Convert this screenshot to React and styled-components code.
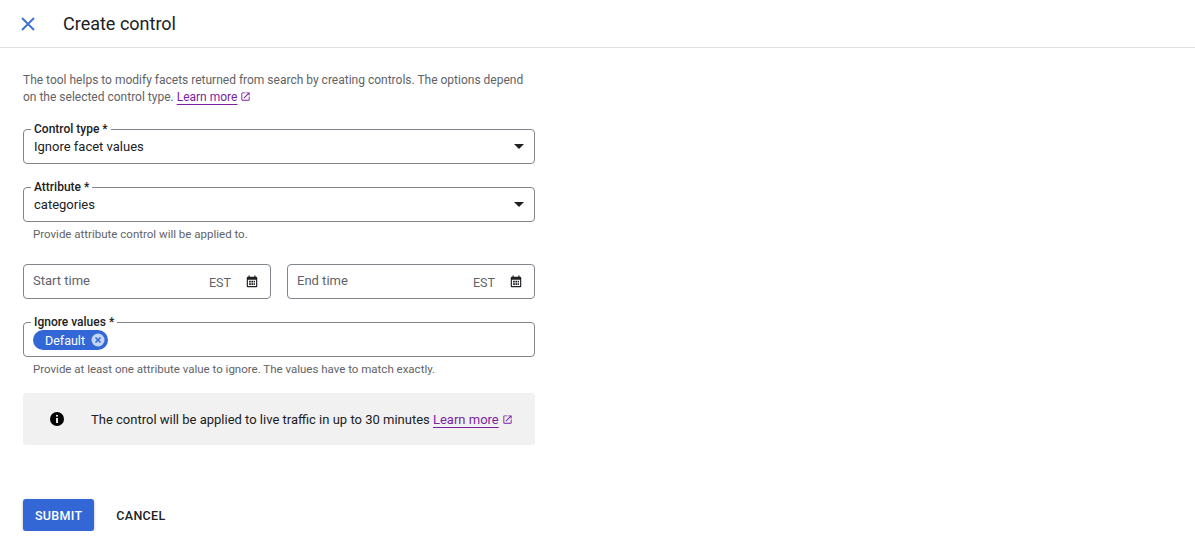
import React from "react";
import styled, { createGlobalStyle } from "styled-components";

const Global = createGlobalStyle`
  body { margin: 0; font-family: Roboto, "Liberation Sans", sans-serif; color: #202124; background: #fff; }
`;

const Header = styled.header`
  height: 48px; display: flex; align-items: center; border-bottom: 1px solid #e0e0e0; box-sizing: border-box;
`;
const CloseBtn = styled.button`
  width: 54px; height: 48px; border: 0; background: none; padding: 0 0 0 2px; display: flex; align-items: center; justify-content: center;
`;
const Title = styled.h1`
  margin: 0 0 0 9px; font-size: 18px; font-weight: 400; color: #202124;
`;
const Body = styled.main`
  padding: 24px 23px 0; width: 512px; display: flex; flex-direction: column;
`;
const Desc = styled.p`
  margin: 0; font-size: 12px; line-height: 17px; color: #5f6368; width: 505px;
`;
const Link = styled.a`
  color: #7b1fa2; text-decoration: underline; text-underline-offset: 3px; cursor: pointer;
`;
const Field = styled.fieldset`
  margin: ${p => p.$mt || 0}px 0 0; padding: 0 10px 6px; border: 1px solid #80868b; border-radius: 4px;
  display: flex; align-items: center; min-width: 0;
`;
const Legend = styled.legend`
  font-size: 12px; line-height: 12px; font-weight: 500; padding: 0 3px; margin-left: -3px; color: #202124;
`;
const Value = styled.div`
  flex: 1; font-size: 13px; color: #202124; display: flex; align-items: center; height: 22px;
`;
const Hint = styled.div`
  font-size: 11.5px; color: #5f6368; padding: 6px 0 0 10px; line-height: 13px;
`;
const Row = styled.div`
  display: flex; gap: 16px; margin-top: 23px;
`;
const Box = styled.div`
  flex: 1; height: 35px; box-sizing: border-box; border: 1px solid #80868b; border-radius: 4px;
  display: flex; align-items: center; padding: 0 11px 0 9px; font-size: 13px; color: #5f6368; gap: 14px;
`;
const Grow = styled.span` flex: 1; margin-top: -2px; `;
const Tz = styled.span` font-size: 12.5px; color: #5f6368; margin-top: 2px; `;
const Chip = styled.span`
  background: #3367d6; color: #fff; border-radius: 12px; height: 20px; display: inline-flex; align-items: center;
  padding: 0 2px 0 12px; font-size: 12.5px; gap: 5px; margin-left: -1px; margin-top: 2px;
`;
const Info = styled.div`
  margin-top: 17px; background: #f1f1f1; border-radius: 3px; height: 52px; display: flex; align-items: center;
  padding-left: 26px; gap: 26px; font-size: 13px; color: #202124;
`;
const Actions = styled.div`
  display: flex; align-items: center; gap: 10px; margin-top: 54px;
`;
const Btn = styled.button`
  height: 32px; border: 0; border-radius: 3px; font-family: inherit; font-size: 12.5px; font-weight: 500; letter-spacing: 0.3px;
  padding: 0 12px; cursor: pointer;
  background: ${p => p.$primary ? "#3367d6" : "transparent"};
  color: ${p => p.$primary ? "#fff" : "#202124"};
  box-shadow: ${p => p.$primary ? "0 1px 3px rgba(0,0,0,0.3)" : "none"};
`;

const Caret = () => (
  <svg width="10" height="5" viewBox="0 0 10 5"><path d="M0 0h10L5 5z" fill="#202124" /></svg>
);
const Ext = () => (
  <svg width="11" height="11" viewBox="0 0 24 24" style={{ verticalAlign: "-1px" }}><path d="M19 19H5V5h7V3H5a2 2 0 0 0-2 2v14a2 2 0 0 0 2 2h14c1.1 0 2-.9 2-2v-7h-2v7zM14 3v2h3.59l-9.83 9.83 1.41 1.41L19 6.41V10h2V3h-7z" fill="#7b1fa2" /></svg>
);
const Cal = () => (
  <svg width="14" height="14" viewBox="0 0 24 24"><path d="M19 3h-1V1h-2v2H8V1H6v2H5a2 2 0 0 0-2 2v14a2 2 0 0 0 2 2h14a2 2 0 0 0 2-2V5a2 2 0 0 0-2-2zm0 16H5V8h14v11zM7 10h3v3H7zm4 0h3v3h-3zm4 0h2v3h-2zm-8 4h3v3H7zm4 0h3v3h-3zm4 0h2v3h-2z" fill="#202124" /></svg>
);

export default function App() {
  return (
    <>
      <Global />
      <Header>
        <CloseBtn aria-label="Close">
          <svg width="14" height="14" viewBox="0 0 14 14"><path d="M1 1l12 12M13 1L1 13" stroke="#3b6fd8" strokeWidth="1.8" /></svg>
        </CloseBtn>
        <Title>Create control</Title>
      </Header>
      <Body>
        <Desc>
          The tool helps to modify facets returned from search by creating controls. The options depend on the selected control type. <Link>Learn more</Link> <Ext />
        </Desc>
        <Field $mt={17}>
          <Legend>Control type *</Legend>
          <Value>Ignore facet values</Value>
          <Caret />
        </Field>
        <Field $mt={17}>
          <Legend>Attribute *</Legend>
          <Value>categories</Value>
          <Caret />
        </Field>
        <Hint>Provide attribute control will be applied to.</Hint>
        <Row>
          <Box><Grow>Start time</Grow><Tz>EST</Tz><Cal /></Box>
          <Box><Grow>End time</Grow><Tz>EST</Tz><Cal /></Box>
        </Row>
        <Field $mt={17}>
          <Legend>Ignore values *</Legend>
          <Value>
            <Chip>Default
              <svg width="16" height="16" viewBox="0 0 16 16"><circle cx="8" cy="8" r="6.5" fill="#c5d5f5" /><path d="M5.5 5.5l5 5M10.5 5.5l-5 5" stroke="#3367d6" strokeWidth="1.6" /></svg>
            </Chip>
          </Value>
        </Field>
        <Hint>Provide at least one attribute value to ignore. The values have to match exactly.</Hint>
        <Info>
          <svg width="16" height="16" viewBox="0 0 16 16"><circle cx="8" cy="8" r="7" fill="#000" /><rect x="7.1" y="7" width="1.8" height="5" fill="#fff" /><circle cx="8" cy="4.8" r="1" fill="#fff" /></svg>
          <span>The control will be applied to live traffic in up to 30 minutes <Link>Learn more</Link> <Ext /></span>
        </Info>
        <Actions>
          <Btn $primary>SUBMIT</Btn>
          <Btn>CANCEL</Btn>
        </Actions>
      </Body>
    </>
  );
}
